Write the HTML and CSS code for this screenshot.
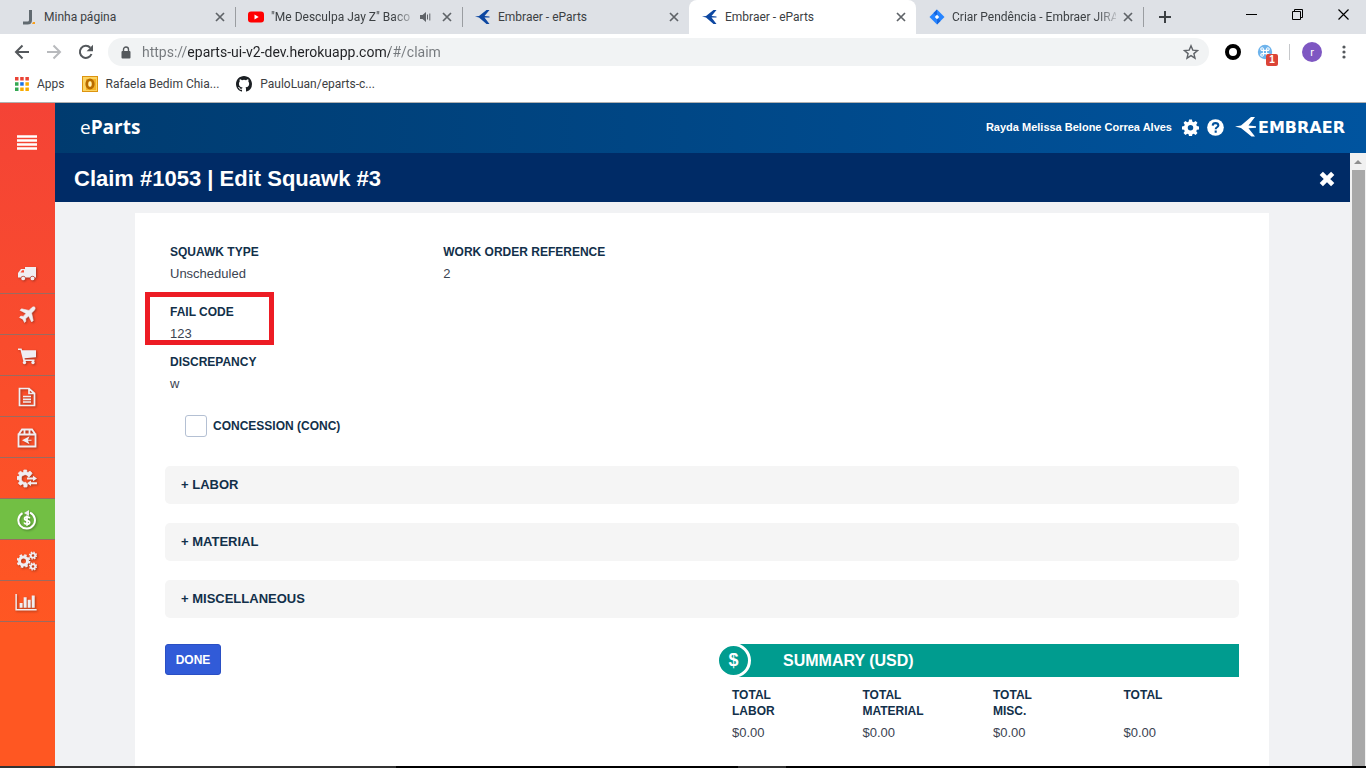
FILE: index.html
```html
<!DOCTYPE html>
<html lang="en">
<head>
<meta charset="utf-8">
<title>Embraer - eParts</title>
<link rel="stylesheet" href="styles.css">
</head>
<body>
<svg class="sprite" aria-hidden="true">
  <symbol id="i-x" viewBox="0 0 10 10"><path d="M1 1l8 8M9 1L1 9" stroke="#5f6368" stroke-width="1.7" fill="none"/></symbol>
  <symbol id="i-emb" viewBox="0 0 16 16"><path d="M0 7.600L4 7l7.500-6H14.500L9.500 7l5 .5v1l-5 .1L14.500 15h-3L4 8.500z" fill="#0d47a1"/></symbol>
</svg>

<header class="browser">
  <div class="tabs">
    <div class="tab">
      <svg class="fav" viewBox="0 0 16 16"><path d="M9.500 1v10q0 3-3 3H2" fill="none" stroke="#616a70" stroke-width="3"/><path d="M12 13h2v2h-3z" fill="#f9a01b"/></svg>
      <span class="tab-title">Minha página</span>
      <button class="close" aria-label="Close tab"><svg><use href="#i-x"/></svg></button>
    </div>
    <div class="tab divided">
      <svg class="fav" viewBox="0 0 16 16"><rect x="0" y="2.500" width="16" height="11" rx="3" fill="#f00"/><path d="M6.500 5.500v5l4.200-2.500z" fill="#fff"/></svg>
      <span class="tab-title fade">"Me Desculpa Jay Z" Baco</span>
      <svg class="sound" viewBox="0 0 12 10"><path d="M0 3h2.500L6 0v10L2.500 7H0z" fill="#5f6368"/><path d="M7.500 2.500v5M9.800 1.500v7" stroke="#5f6368" fill="none"/></svg>
      <button class="close" aria-label="Close tab"><svg><use href="#i-x"/></svg></button>
    </div>
    <div class="tab divided">
      <svg class="fav"><use href="#i-emb"/></svg>
      <span class="tab-title">Embraer - eParts</span>
      <button class="close" aria-label="Close tab"><svg><use href="#i-x"/></svg></button>
    </div>
    <div class="tab active">
      <svg class="fav"><use href="#i-emb"/></svg>
      <span class="tab-title">Embraer - eParts</span>
      <button class="close" aria-label="Close tab"><svg><use href="#i-x"/></svg></button>
    </div>
    <div class="tab">
      <svg class="fav" viewBox="0 0 16 16"><path d="M8 .5L15.500 8 8 15.500.5 8z" fill="#2684ff"/><path d="M8 .5L4.500 4 8 7.500z" fill="#1564dc"/><path d="M8 15.500l3.500-3.500L8 8.500z" fill="#1564dc"/><path d="M8 5.800L10.200 8 8 10.200 5.800 8z" fill="#fff"/></svg>
      <span class="tab-title fade">Criar Pendência - Embraer JIRA</span>
      <button class="close" aria-label="Close tab"><svg><use href="#i-x"/></svg></button>
    </div>
    <button class="new-tab divided" aria-label="New tab"><svg viewBox="0 0 12 12"><path d="M6 0v12M0 6h12" stroke="#3c4043" stroke-width="2"/></svg></button>
    <div class="window-buttons">
      <button aria-label="Minimize"><svg viewBox="0 0 11 11"><path d="M0 5.500h11" stroke="#000"/></svg></button>
      <button aria-label="Restore"><svg viewBox="0 0 11 11"><path d="M.5 2.500h8v8h-8zM2.500 2.500v-2h8v8h-2" fill="none" stroke="#000"/></svg></button>
      <button aria-label="Close"><svg viewBox="0 0 11 11"><path d="M.5.5l10 10M10.500.5l-10 10" stroke="#000" stroke-width="1.200"/></svg></button>
    </div>
  </div>

  <div class="toolbar">
    <button aria-label="Back"><svg viewBox="0 0 16 16"><path d="M15 8H2M8.500 1.500L2 8l6.500 6.500" fill="none" stroke="#54585c" stroke-width="2"/></svg></button>
    <button aria-label="Forward"><svg viewBox="0 0 16 16"><path d="M1 8h13M7.500 1.500L14 8l-6.500 6.500" fill="none" stroke="#b8babd" stroke-width="2"/></svg></button>
    <button aria-label="Reload"><svg viewBox="0 0 16 16"><path d="M13.500 10A6 6 0 1 1 12.300 3.800" fill="none" stroke="#54585c" stroke-width="2"/><path d="M15 .8v6.400H8.600z" fill="#54585c"/></svg></button>
    <div class="omnibox">
      <svg class="lock" viewBox="0 0 10 13"><path d="M2.500 6V3.500a2.500 2.500 0 0 1 5 0V6" fill="none" stroke="#54585c" stroke-width="1.400"/><rect x=".5" y="5" width="9" height="7.500" rx="1" fill="#54585c"/></svg>
      <input type="text" class="url" aria-label="Address" value="https://eparts-ui-v2-dev.herokuapp.com/#/claim">
      <button class="star" aria-label="Bookmark"><svg viewBox="0 0 16 16"><path d="M8 1.800l1.800 4.300 4.700.4-3.600 3.100 1.100 4.600L8 11.700l-4 2.500 1.100-4.600L1.500 6.500l4.700-.4z" fill="none" stroke="#5f6368" stroke-width="1.400"/></svg></button>
    </div>
    <button class="ext" aria-label="Extension"><svg viewBox="0 0 16 16"><circle cx="8" cy="8" r="6" fill="#fff" stroke="#000" stroke-width="4"/></svg></button>
    <button class="ext cmd" aria-label="Shortcuts, 1 new"><svg viewBox="0 0 16 16"><circle cx="8" cy="8" r="7.200" fill="#6db3ec"/><path d="M6.400 6.400h3.200v3.200H6.400zM6.400 6.400V5.200a1.300 1.300 0 1 0-1.300 1.200zM9.600 6.400V5.200a1.300 1.300 0 1 1 1.300 1.200zM6.400 9.600v1.200a1.300 1.300 0 1 1-1.300-1.200zM9.600 9.600v1.200a1.300 1.300 0 1 0 1.300-1.200z" fill="none" stroke="#fff" stroke-width="1.100"/></svg><span class="badge">1</span></button>
    <span class="sep"></span>
    <button class="avatar" aria-label="Profile">r</button>
    <button class="dots" aria-label="Menu"><svg viewBox="0 0 4 14"><g fill="#54585c"><circle cx="2" cy="2" r="1.600"/><circle cx="2" cy="7" r="1.600"/><circle cx="2" cy="12" r="1.600"/></g></svg></button>
  </div>

  <nav class="bookmarks">
    <a href="#apps"><svg viewBox="0 0 14 14"><g fill="#ea4335"><path d="M0 0h3.500v3.500H0zM5.200 0h3.500v3.500H5.200zM10.400 0h3.500v3.500h-3.500z"/></g><g fill="#34a853"><path d="M0 5.200h3.500v3.500H0zM0 10.400h3.500v3.500H0z"/></g><path d="M5.200 5.200h3.500v3.500H5.200z" fill="#1a73e8"/><path d="M10.400 5.200h3.500v3.500h-3.500zM5.200 10.400h3.500v3.500H5.200zM10.400 10.400h3.500v3.500h-3.500z" fill="#f9ab00"/></svg>Apps</a>
    <a href="#mail"><svg class="big" viewBox="0 0 16 16"><rect x=".5" y=".5" width="15" height="15" fill="#fcd462" stroke="#dd9410"/><path d="M4 3h10v11H4z" fill="#f3b226"/><ellipse cx="8" cy="8" rx="3.300" ry="4.200" fill="none" stroke="#b86b00" stroke-width="2.600"/><ellipse cx="8" cy="8" rx="1.600" ry="2.800" fill="#fff0b8"/></svg>Rafaela Bedim Chia...</a>
    <a href="#repo"><svg class="big" viewBox="0 0 16 16"><path fill="#1b1f23" d="M8 0C3.580 0 0 3.580 0 8c0 3.540 2.290 6.530 5.470 7.590.4.070.55-.17.55-.38v-1.490c-2.010.37-2.530-.49-2.690-.94-.09-.23-.48-.94-.82-1.130-.28-.15-.68-.52-.01-.53.63-.01 1.080.58 1.230.82.72 1.210 1.870.87 2.330.66.07-.52.28-.87.510-1.070-1.780-.2-3.640-.89-3.640-3.950 0-.87.31-1.590.82-2.150-.08-.2-.36-1.020.08-2.120 0 0 .67-.21 2.200.82a7.400 7.400 0 0 1 4 0c1.530-1.040 2.200-.82 2.200-.82.44 1.100.16 1.920.08 2.120.51.56.82 1.270.82 2.150 0 3.070-1.870 3.750-3.650 3.950.29.25.54.73.54 1.480v2.200c0 .21.15.46.55.38A8 8 0 0 0 16 8c0-4.420-3.580-8-8-8z"/></svg>PauloLuan/eparts-c...</a>
  </nav>
</header>

<div class="app">
  <nav class="sidebar">
    <button class="menu" aria-label="Menu"><svg viewBox="0 0 20 15"><path d="M0 1.500h20M0 5.500h20M0 9.500h20M0 13.500h20" stroke="#fff" stroke-width="2.600"/></svg></button>
    <a href="#truck" aria-label="Shipping"><svg viewBox="0 0 20 20"><path d="M8 3h11v10.500h-1.200a2.400 2.400 0 0 0-4.600 0H8.500a2.400 2.400 0 0 0-4.600 0H1V9l3-4h4z"/><path d="M3.500 8.500L5.200 6.300H7v2.200z" fill="#f94a31"/><circle cx="6.200" cy="14.400" r="1.900"/><circle cx="15.500" cy="14.400" r="1.900"/></svg></a>
    <a href="#plane" aria-label="Aircraft"><svg viewBox="0 0 20 20"><path d="M17.800 2.200c-.8-.8-2.400-.2-3.300.7L12 5.400 4.500 3.800 3 5.300l6 3.100-2.800 3-2.400-.3L2.500 12.400l3.300 1.800 1.800 3.300 1.300-1.300-.3-2.400 3-2.800 3.100 6 1.500-1.500L14.600 8l2.500-2.500c.9-.9 1.500-2.500.7-3.300z" stroke="#f0eef2" stroke-width=".6"/></svg></a>
    <a href="#cart" aria-label="Orders"><svg viewBox="0 0 20 20"><path d="M1 2.500h3.600l.5 1.800H19v6.900l-11.500 1 .3 1.300h9.700v1.600H6.300L3.500 4.100H1z"/><circle cx="7.500" cy="16.500" r="1.700"/><circle cx="16" cy="16.500" r="1.700"/></svg></a>
    <a href="#doc" aria-label="Documents"><svg viewBox="0 0 20 20"><path d="M2.500 1.500H12l5.500 5v12h-15zM12 1.500v5h5M6 9.500h8M6 12.300h8M6 15h8" fill="none" stroke="#f0eef2" stroke-width="1.700"/></svg></a>
    <a href="#box" aria-label="Packages"><svg viewBox="0 0 20 20"><path d="M1.500 6.500h17v12h-17zM1.500 6.500L5 1.500h10l3.500 5M7.500 1.500v5M12.500 1.500v5" fill="none" stroke="#f0eef2" stroke-width="1.800"/><path d="M5 12.200l7.500-4-1.500 3.500h3.500v1H11l1.500 3.500z"/></svg></a>
    <a href="#exchange" aria-label="Exchange"><svg viewBox="0 0 20 20"><path d="M13.800 6l1.300-1.800-2-2L11 3.500 9.700 3V1H6.800v2l-1.500.5-2-1.300-2 2L2.500 6 2 7.500H0v3l2 .3.600 1.600-1.200 1.800 2 2 2-1.200 1.500.6V18h3l.4-2.500-1.500-2.200a3.800 3.800 0 1 1 2.900-5z" stroke="#f0eef2" stroke-width=".8"/><path d="M10 8.500h6V6.800l4 2.700-4 2.700v-1.700h-6zM20 13.300h-6v-1.800l-4 2.800 4 2.700v-1.700h6z"/></svg></a>
    <a href="#claim" class="current" aria-label="Claims"><svg viewBox="0 0 20 20"><path d="M13 2.700a8.300 8.300 0 1 1-7.500.4" fill="none" stroke="#fff" stroke-width="2"/><path d="M12 0v6L7 3z"/><path d="M12.800 8.300c-.5-1.100-1.500-1.400-2.700-1.400-3 0-3.300 2.800-.5 3.400 4 .7 4 3.900.5 3.900-1.500 0-2.500-.5-3-1.700M10 5.500v10.300" fill="none" stroke="#fff" stroke-width="1.800"/></svg></a>
    <a href="#settings" aria-label="Settings"><svg viewBox="0 0 20 20"><g fill="none" stroke="#f0eef2"><circle cx="6.500" cy="10" r="4" stroke-width="3"/><circle cx="6.500" cy="10" r="5.900" stroke-width="2" stroke-dasharray="2.500 2.130"/><circle cx="16" cy="4.500" r="2.200" stroke-width="1.800"/><circle cx="16" cy="4.500" r="3.400" stroke-width="1.400" stroke-dasharray="1.400 1.270"/><circle cx="16" cy="15.500" r="2.200" stroke-width="1.800"/><circle cx="16" cy="15.500" r="3.400" stroke-width="1.400" stroke-dasharray="1.400 1.270"/></g></svg></a>
    <a href="#reports" class="chart" aria-label="Reports"><svg viewBox="0 0 20 16"><path d="M.7 0v14.800H20" fill="none" stroke="#f0eef2" stroke-width="1.400"/><path d="M4 8.500h2.800V13H4zM7.800 3h2.800v10H7.800zM11.600 5.500h2.800V13h-2.800zM15.400 1.500h2.800V13h-2.800z"/></svg></a>
  </nav>

  <div class="page">
    <header class="top">
      <a href="#home" class="brand"><span>e</span>Parts</a>
      <div class="user">
        <span class="name">Rayda Melissa Belone Correa Alves</span>
        <button aria-label="Settings"><svg viewBox="0 0 18 18"><path fill="#fff" fill-rule="evenodd" d="M7.500.5h3l.5 2.300 1.400.6 2-1.300 2 2-1.300 2 .6 1.400 2.300.5v3l-2.300.5-.6 1.400 1.300 2-2 2-2-1.300-1.400.6-.5 2.300h-3L7 16.200l-1.400-.6-2 1.300-2-2 1.300-2-.6-1.400L0 11V8l2.300-.5.6-1.400-1.300-2 2-2 2 1.300L7 2.800zM9 6.300a2.900 2.900 0 1 0 0 5.800 2.900 2.900 0 0 0 0-5.800z"/></svg></button>
        <button aria-label="Help"><svg viewBox="0 0 18 18"><circle cx="9" cy="9" r="8.800" fill="#fff"/><path d="M6 7q.2-2.600 3-2.600t3 2.400c0 1.900-2.800 2-2.800 4M9.200 12.300v2.200" fill="none" stroke="#00509b" stroke-width="2.200"/></svg></button>
        <a href="#embraer" class="logo"><svg viewBox="0 0 21 20"><path d="M0 9.600L6 8.500 16 0h4l-6.500 8.500 7.500.7v1.500l-7.500.5L20 19.500h-3.500L6 11z" fill="#fff"/></svg>EMBRAER</a>
      </div>
    </header>

    <div class="body">
      <div class="scroll">
        <div class="title">
          <h1>Claim #1053 | Edit Squawk #3</h1>
          <button aria-label="Close"><svg viewBox="0 0 16 16"><path d="M2.300 2.300l11.400 11.400M13.700 2.300L2.300 13.700" stroke="#fff" stroke-width="4.600"/></svg></button>
        </div>
        <main class="card">
          <dl class="fields">
            <div><dt>SQUAWK TYPE</dt><dd>Unscheduled</dd></div>
            <div><dt>WORK ORDER REFERENCE</dt><dd>2</dd></div>
            <div class="row marked"><dt>FAIL CODE</dt><dd>123</dd></div>
            <div class="row tight"><dt>DISCREPANCY</dt><dd>w</dd></div>
          </dl>
          <label class="check"><input type="checkbox">CONCESSION (CONC)</label>
          <div class="sections">
            <button>+ LABOR</button>
            <button>+ MATERIAL</button>
            <button>+ MISCELLANEOUS</button>
          </div>
          <div class="bottom">
            <div><button class="done">DONE</button></div>
            <section class="summary">
              <h2><span class="coin">$</span>SUMMARY (USD)</h2>
              <table>
                <thead><tr><th>TOTAL<br>LABOR</th><th>TOTAL<br>MATERIAL</th><th>TOTAL<br>MISC.</th><th>TOTAL</th></tr></thead>
                <tbody><tr><td>$0.00</td><td>$0.00</td><td>$0.00</td><td>$0.00</td></tr></tbody>
              </table>
            </section>
          </div>
        </main>
      </div>
      <div class="scrollbar"><svg viewBox="0 0 8 4"><path d="M0 4l4-4 4 4z" fill="#8f8f8f"/></svg><span></span></div>
    </div>
  </div>
</div>
<footer class="taskbar"><span class="lit wide"></span><span class="lit"></span></footer>
</body>
</html>
```
FILE: styles.css
```css
* { box-sizing: border-box; }
body {
  margin: 0;
  height: 100vh;
  display: flex;
  flex-direction: column;
  overflow: hidden;
  font: 13px "Liberation Sans", Arial, sans-serif;
  color: #3b4351;
}
button { border: 0; padding: 0; background: none; font: inherit; color: inherit; display: flex; align-items: center; justify-content: center; flex: none; }
a { color: inherit; text-decoration: none; }
svg { display: block; flex: none; }
.sprite { position: absolute; width: 0; height: 0; }

/* Browser frame */
.browser { flex: none; background: #fff; border-bottom: 1px solid #b0b0b0; font: 12px Roboto, "Noto Sans", sans-serif; color: #3c4043; }
.tabs { display: flex; height: 34px; padding-left: 8px; background: #dee1e6; }
.tab { flex: 0 1 227px; min-width: 0; display: flex; align-items: center; padding: 0 10px 0 13px; gap: 7px; position: relative; }
.tab.active { background: #fff; border-radius: 8px 8px 0 0; }
.divided::before { content: ""; position: absolute; left: 0; top: 7px; height: 20px; width: 1px; background: #9a9da1; }
.fav { width: 16px; height: 16px; }
.tab-title { flex: 1; min-width: 0; overflow: hidden; white-space: nowrap; }
.fade { mask-image: linear-gradient(90deg, #000 calc(100% - 20px), #0003); }
.sound { width: 12px; height: 10px; margin-right: 3px; }
.close svg { width: 10px; height: 10px; }
.new-tab { position: relative; width: 44px; }
.new-tab svg { width: 12px; height: 12px; }
.window-buttons { margin-left: auto; display: flex; height: 28px; }
.window-buttons button { width: 46px; }
.window-buttons svg { width: 11px; height: 11px; }

.toolbar { display: flex; align-items: center; height: 36px; padding: 0 14px; gap: 16px; }
.toolbar > button { width: 16px; height: 16px; }
.toolbar > button svg { width: 16px; height: 16px; }
.omnibox { flex: 1; display: flex; align-items: center; height: 28px; margin-left: -2px; padding: 0 10px 0 13px; border-radius: 14px; background: #f1f3f4; }
.lock { width: 10px; height: 13px; margin-right: 11px; }
.url {
  flex: 1;
  min-width: 0;
  border: 0;
  padding: 0;
  outline: 0;
  font: 14px Roboto, "Noto Sans", sans-serif;
  background: linear-gradient(90deg, #74787c 46px, #202124 46px, #202124 248px, #74787c 248px);
  background-clip: text;
  color: transparent;
}
.star svg { width: 16px; height: 16px; }
.cmd { position: relative; }
.badge { position: absolute; left: 9px; top: 10px; width: 12px; height: 12px; border-radius: 2px; background: #db4437; color: #fff; font: bold 10px/12px "Liberation Sans", sans-serif; text-align: center; }
.sep { width: 1px; height: 16px; background: #c6c8cb; }
.toolbar > .avatar { width: 20px; height: 20px; margin: 0 -2px 0 -4px; border-radius: 50%; background: #7e57c2; color: #fff; font-size: 11px; }
.toolbar > .dots svg { width: 4px; height: 14px; }

.bookmarks { display: flex; align-items: center; gap: 17px; height: 32px; padding: 0 15px 4px; }
.bookmarks a { display: flex; align-items: center; gap: 8px; }
.bookmarks svg { width: 14px; height: 14px; }
.bookmarks .big { width: 16px; height: 16px; }

/* Application */
.app { flex: 1; min-height: 0; display: flex; }
.sidebar { flex: none; width: 55px; background: linear-gradient(#f44336, #ff5722 80%); }
.sidebar .menu { width: 55px; height: 150px; padding: 0 2px 71px 0; }
.menu svg { width: 20px; height: 15px; }
.sidebar a { display: flex; align-items: center; justify-content: center; height: 41px; padding: 2px 1px 0 0; border-bottom: 1px solid #9b6b60; }
.sidebar a svg { width: 20px; height: 20px; fill: #f0eef2; filter: drop-shadow(1px 1px 1px #0005); }
.sidebar .chart { padding-right: 4px; }
.sidebar .chart svg { width: 22px; height: 17px; }
.sidebar .current { background: #72bf44; }

.page { flex: 1; min-width: 0; display: flex; flex-direction: column; }
.top { flex: none; height: 50px; display: flex; align-items: center; justify-content: space-between; padding: 0 21px 2px 25px; background: linear-gradient(90deg, #003b6f, #00549f); color: #fff; }
.brand { font: bold 19px "Open Sans", "Noto Sans", sans-serif; }
.brand span { font-weight: 400; }
.user { display: flex; align-items: center; gap: 8px; }
.name { font-weight: bold; font-size: 11px; margin-right: 2px; }
.user button svg { width: 17px; height: 17px; }
.logo { display: flex; align-items: center; gap: 2px; margin-left: 3px; font: bold 16px "DejaVu Sans", sans-serif; }
.logo svg { width: 21px; height: 20px; }

.body { flex: 1; min-height: 0; display: flex; }
.scroll { flex: 1; min-width: 0; overflow: hidden; display: flex; flex-direction: column; background: #f1f2f4; }
.title { flex: none; height: 49px; display: flex; align-items: center; justify-content: space-between; padding: 3px 15px 0 19px; background: #002b66; color: #fff; }
.title h1 { margin: 0; font-size: 22px; }
.title svg { width: 16px; height: 16px; }
.scrollbar { flex: none; width: 16px; display: flex; flex-direction: column; align-items: center; padding-top: 7px; gap: 6px; background: #f1f1f1; }
.scrollbar svg { width: 8px; height: 4px; }
.scrollbar span { width: 13px; flex: 1; background: #a8a8a8; }

.card { flex: 1 0 auto; margin: 11px 81px 0 80px; padding: 29px 30px 20px; background: #fff; }
.fields { display: grid; grid-template-columns: repeat(4, 1fr); column-gap: 24px; margin: 0; padding-left: 5px; }
.fields dt, .fields dd { margin: 0; }
dt, .check, th { font-size: 12px; font-weight: bold; color: #12304a; }
dt { line-height: 20px; }
dd { line-height: 24px; }
.row { grid-column: 1 / -1; margin-top: 16px; }
.row.tight { margin-top: 6px; }
.marked { position: relative; }
.marked::after { content: ""; box-sizing: border-box; position: absolute; left: -25px; top: -10px; width: 129px; height: 53px; border: 5px solid #ed1c24; }
.check { display: flex; align-items: center; gap: 6px; margin: 19px 0 0 20px; width: max-content; }
.check input { appearance: none; width: 22px; height: 22px; margin: 0; border: 1px solid #b4c0d3; border-radius: 3px; background: #fff; }
.sections { display: flex; flex-direction: column; gap: 19px; margin-top: 29px; }
.sections button { height: 38px; padding: 0 16px 2px; justify-content: flex-start; border-radius: 5px; background: #f5f5f5; font-weight: bold; color: #12304a; }
.bottom { display: grid; grid-template-columns: 1fr 522px; margin-top: 26px; }
.done { width: 56px; height: 31px; border: 1px solid #2a4fc4; border-radius: 3px; background: #315bd8; color: #fff; font-size: 12px; font-weight: bold; }
.summary h2 { position: relative; margin: 0 0 10px 18px; height: 33px; padding-left: 48px; background: #009c8f; color: #fff; font-size: 16px; line-height: 33px; }
.coin { position: absolute; left: -19px; top: -1px; width: 35px; height: 35px; border: 3px solid #fff; border-radius: 50%; background: #009c8f; font-size: 18px; line-height: 29px; text-align: center; }
table { width: 100%; table-layout: fixed; border-collapse: collapse; }
th, td { padding: 0 0 0 15px; text-align: left; vertical-align: top; }
th { line-height: 16px; }
td { line-height: 28px; }

.taskbar { flex: none; height: 2px; display: flex; gap: 25%; background: #000; }
.lit { width: 48px; background: #333; }
.lit.wide { width: 29%; }
```
